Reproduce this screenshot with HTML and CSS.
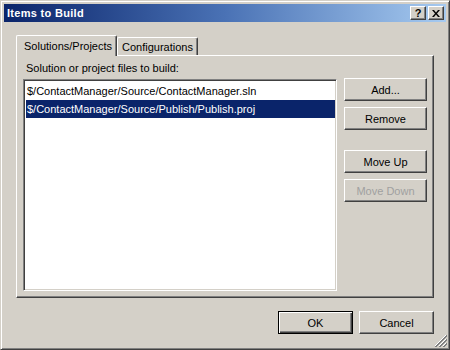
FILE: index.html
```html
<!DOCTYPE html>
<html>
<head>
<meta charset="utf-8">
<link rel="stylesheet" href="styles.css">
</head>
<body>
<div class="window">
  <div class="titlebar">
    <span class="title">Items to Build</span>
    <div class="tbtns">
      <div class="tbtn"><span class="q">?</span></div>
      <div class="tbtn"><svg width="8" height="7" viewBox="0 0 8 7"><path d="M0 0h2l2 2.5L6 0h2L5 3.5 8 7H6L4 4.5 2 7H0l3-3.5z" fill="#000"/></svg></div>
    </div>
  </div>
  <div class="content">
    <div class="tabs">
      <div class="tab active">Solutions/Projects</div>
      <div class="tab">Configurations</div>
    </div>
    <div class="panel">
      <div class="label">Solution or project files to build:</div>
      <div class="panel-row">
        <div class="listbox">
          <div class="item">$/ContactManager/Source/ContactManager.sln</div>
          <div class="item sel">$/ContactManager/Source/Publish/Publish.proj</div>
        </div>
        <div class="side">
          <div class="btn">Add...</div>
          <div class="btn">Remove</div>
          <div class="btn spaced">Move Up</div>
          <div class="btn disabled">Move Down</div>
        </div>
      </div>
    </div>
    <div class="footer">
      <div class="btn wide default">OK</div>
      <div class="btn wide">Cancel</div>
    </div>
  </div>
  <svg class="grip" width="12" height="12" viewBox="0 0 12 12">
    <path d="M11 0L0 11M11 4L4 11M11 8L8 11" stroke="#fff" stroke-width="1"/>
    <path d="M12 0L0 12M12 1L1 12M12 4L4 12M12 5L5 12M12 8L8 12M12 9L9 12" stroke="#808080" stroke-width="1"/>
  </svg>
</div>
</body>
</html>
```

FILE: styles.css
```css
* { box-sizing: border-box; }
html, body { margin: 0; padding: 0; background: #d4d0c8; }
body {
  font-family: "Liberation Sans", Arial, sans-serif;
  font-size: 11px;
  color: #000;
}
.window {
  position: relative;
  width: 450px;
  height: 350px;
  background: #d4d0c8;
  border-top: 1px solid #d4d0c8;
  border-left: 1px solid #d4d0c8;
  border-right: 1px solid #404040;
  border-bottom: 1px solid #404040;
  box-shadow: inset 1px 1px 0 #fff, inset -1px -1px 0 #808080;
  padding: 3px;
  display: flex;
  flex-direction: column;
}
.titlebar {
  height: 18px;
  background: linear-gradient(to right, #0a246a 0%, #4a72b5 50%, #a6caf0 100%);
  display: flex;
  align-items: center;
  justify-content: space-between;
  padding: 0 2px 0 3px;
}
.title {
  color: #fff;
  font-weight: bold;
  font-size: 11px;
  letter-spacing: 0.3px;
}
.tbtns { display: flex; gap: 2px; }
.tbtn {
  width: 16px;
  height: 14px;
  background: #d4d0c8;
  border-top: 1px solid #fff;
  border-left: 1px solid #fff;
  border-right: 1px solid #404040;
  border-bottom: 1px solid #404040;
  box-shadow: inset -1px -1px 0 #808080;
  display: flex;
  align-items: center;
  justify-content: center;
}
.tbtn .q { font-weight: bold; font-size: 11px; line-height: 11px; }
.content {
  flex: 1;
  padding: 13px 12px 0 12px;
  display: flex;
  flex-direction: column;
}
.tabs {
  display: flex;
  align-items: flex-end;
  height: 21px;
  position: relative;
  z-index: 1;
  margin-bottom: -1px;
}
.tab {
  height: 18px;
  padding: 0 6px;
  border-top: 1px solid #fff;
  border-left: 1px solid #fff;
  border-right: 1px solid #404040;
  box-shadow: inset -1px 0 0 #808080;
  border-radius: 2px 2px 0 0;
  display: flex;
  align-items: center;
  background: #d4d0c8;
}
.tab.active {
  height: 21px;
  padding: 0 7px;
  width: 101px;
  padding-bottom: 1px;
}
.tab:not(.active) { width: 81px; justify-content: center; margin-bottom: 1px; }
.panel {
  height: 243px;
  border-top: 1px solid #fff;
  border-left: 1px solid #fff;
  border-right: 1px solid #404040;
  border-bottom: 1px solid #404040;
  box-shadow: inset -1px -1px 0 #808080;
  padding: 6px 6px 6px 6px;
  display: flex;
  flex-direction: column;
}
.label { height: 13px; line-height: 13px; padding-left: 3px; margin-bottom: 4px; }
.panel-row { display: flex; flex: 1; gap: 7px; }
.listbox {
  width: 314px;
  background: #fff;
  border-top: 1px solid #808080;
  border-left: 1px solid #808080;
  border-right: 1px solid #fff;
  border-bottom: 1px solid #fff;
  box-shadow: inset 1px 1px 0 #404040, inset -1px -1px 0 #d4d0c8;
  padding: 2px 1px 1px 2px;
}
.item {
  height: 18px;
  line-height: 18px;
  padding-left: 1px;
  white-space: nowrap;
}
.item.sel { background: #0a246a; color: #fff; }
.side { display: flex; flex-direction: column; margin-top: -1px; }
.btn {
  width: 83px;
  height: 23px;
  background: #d4d0c8;
  border-top: 1px solid #fff;
  border-left: 1px solid #fff;
  border-right: 1px solid #404040;
  border-bottom: 1px solid #404040;
  box-shadow: inset -1px -1px 0 #808080;
  display: flex;
  align-items: center;
  justify-content: center;
  margin-bottom: 6px;
}
.btn.spaced { margin-top: 14px; }
.btn.disabled { color: #a0a0a0; }
.footer {
  display: flex;
  justify-content: flex-end;
  gap: 6px;
  margin-top: 13px;
}
.btn.wide { width: 75px; margin-bottom: 0; }
.btn.default {
  border: 1px solid #000;
  box-shadow: inset 1px 1px 0 #fff, inset -1px -1px 0 #404040, inset -2px -2px 0 #808080;
}
.grip { position: absolute; right: 2px; bottom: 2px; }
```
